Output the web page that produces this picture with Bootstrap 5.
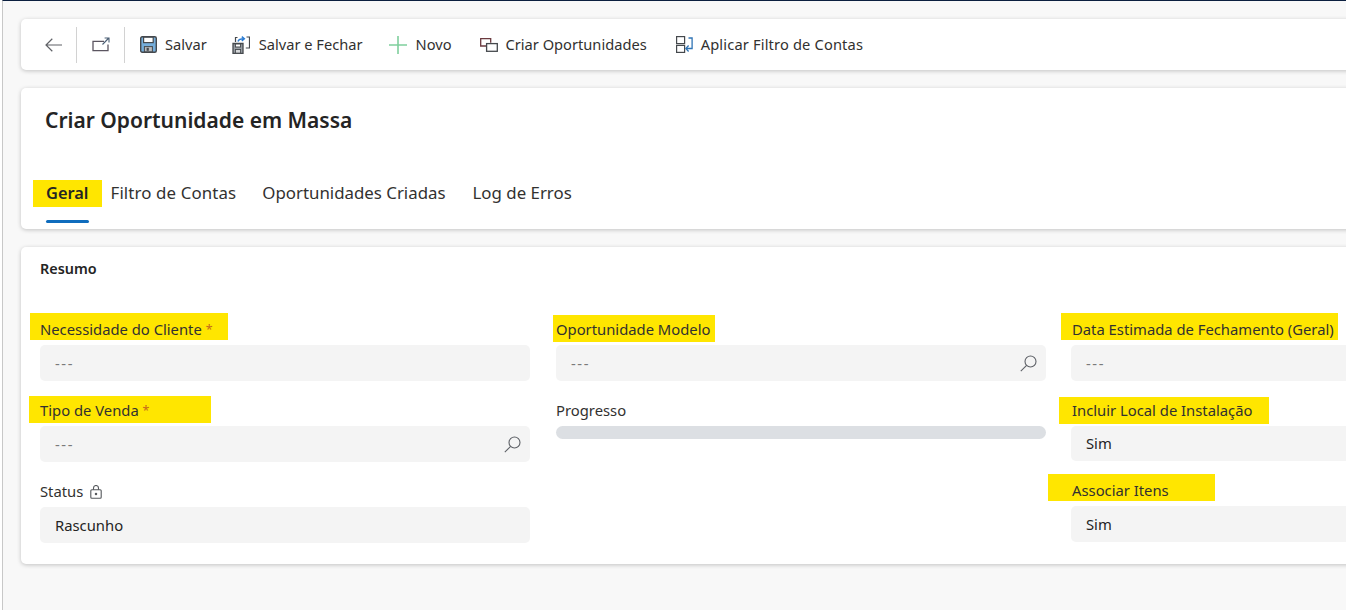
<!DOCTYPE html>
<html lang="pt-BR">
<head>
<meta charset="utf-8">
<title>Criar Oportunidade em Massa</title>
<link href="https://cdn.jsdelivr.net/npm/bootstrap@5.3.0/dist/css/bootstrap.min.css" rel="stylesheet">
<style>
html,body{height:100%;margin:0;background:#fff;overflow:hidden}
body{font-family:"Noto Sans","Open Sans",sans-serif;color:#242424;font-size:14px}
.shell{width:1344px;height:610px;overflow:hidden;background:#f8f8f8;border-top:1px solid #0b1f3f;border-left:1px solid #c8c8c8;margin-left:2px;position:relative;padding:18px 0 0 18px}
.pane{width:1400px;background:#fff;border:0;border-radius:5px;box-shadow:0 1px 4px rgba(0,0,0,.22)}
.tbar{height:51px;margin-bottom:18px;padding-left:11px}
.tb-icon{width:44px;height:36px}
.tb-arrow{margin-right:2px}
.tb-icon2{width:47px;height:36px}
.tb-sep{width:1px;height:36px;background:#d2d2d2}
.tb-list{margin-left:2px}
.tb-item{padding:0 13px;height:36px;gap:8px;font-size:14.65px;color:#323130;white-space:nowrap}
.tb-wide{gap:9px}
.tb-snug{margin-right:-1px}
.tb-shift{margin-left:2px}
.tb-last{margin-left:3px;letter-spacing:.16px}
.head-pane{height:141px;margin-bottom:18px;padding:18px 0 0 24px}
.page-title{font-size:21px;font-weight:600;line-height:28px;margin:0 0 47px;color:#242424}
.tabs-row{padding-left:1px;gap:22px}
.tab-link{position:relative;z-index:0;font-size:16.85px;line-height:24px;color:#323130;white-space:nowrap;height:49px}
.tab-link.on{font-weight:600;font-size:16.4px;color:#242424}
.tab-link.on::after{content:"";position:absolute;left:0;right:0;top:39px;height:3px;border-radius:2px;background:#0f6cbd}
.tab-wide{letter-spacing:.12px}
.tab-gap{margin-left:4px}
.tab-gap2{margin-left:5px}
.form-pane{height:317px;padding:12px 0 0 19px}
.sec-title{font-size:14.4px;font-weight:600;line-height:20px;margin:0 0 40px;color:#242424}
.fcol{width:490px;flex:none}
.fcol-b{margin-left:26px}
.fcol-c{margin-left:25px}
.fcol-c .fld-label{padding-left:1px}
.fld{height:81px}
.fld-tight{height:80px}
.fld-tight .fbox{height:35px}
.fld-label{position:relative;z-index:0;display:block;font-size:14.8px;line-height:20px;height:20px;margin:0 0 6px;color:#323130;white-space:nowrap}
.req{color:#c5691d;font-size:12.5px;vertical-align:1px}
.fbox{height:36px;background:#f4f4f4;border-radius:5px;padding:0 9px 0 15px;font-size:14.8px;color:#242424}
.fbox-empty{color:#7a7a7a}
.dash{letter-spacing:1.6px}
.mark-y{position:absolute;background:#ffe600;z-index:-1;height:27px}
.my-tab{left:-13px;top:-1px;width:69px;height:27px}
.my-nec{left:-10px;top:-6px;width:198px}
.my-tip{left:-11px;top:-4px;width:182px}
.my-opo{left:-3px;top:-4px;width:162px}
.my-dat{left:-10px;top:-6px;width:277px}
.my-inc{left:-12px;top:-3px;width:210px}
.my-ass{left:-23px;top:-6px;width:167px}
.bar-track{height:13px;border-radius:7px;background:#dcdfe3}
.lock-ic{margin-left:7px;vertical-align:-2px}
</style>
</head>
<body>
<div class="shell">
  <div class="card pane tbar flex-row align-items-center">
    <a class="tb-icon d-flex align-items-center justify-content-center" aria-label="Voltar">
      <svg class="tb-arrow" width="17" height="14" viewBox="0 0 17 14" fill="none" stroke="#5f6166" stroke-width="1.2"><path d="M17 7H1M7.3 .8 1 7l6.3 6.2"/></svg>
    </a>
    <div class="tb-sep"></div>
    <a class="tb-icon2 d-flex align-items-center justify-content-center" aria-label="Abrir">
      <svg width="18" height="15" viewBox="0 0 18 15" fill="none"><path d="M16 7.5v6.2H1V4.3h11" stroke="#5b5560" stroke-width="1.3"/><path d="M10.5 7.5 16.8 1M12.6 1H17v4.4" stroke="#4b5f75" stroke-width="1.1"/></svg>
    </a>
    <div class="tb-sep"></div>
    <div class="tb-list d-flex align-items-center">
      <div class="tb-item tb-snug d-flex align-items-center">
        <svg width="17" height="17" viewBox="0 0 17 17" fill="none"><rect x=".7" y=".7" width="15.6" height="15.6" rx="1.5" fill="#75aedb" stroke="#45494d" stroke-width="1.4"/><rect x="3.6" y="1.2" width="9.6" height="5.4" fill="#fff" stroke="#45494d" stroke-width="1.2"/><rect x="4.4" y="10.6" width="8" height="5.2" fill="#b9bcbf" stroke="#45494d" stroke-width="1"/><rect x="6.6" y="11.8" width="2.2" height="3" fill="#45494d"/></svg>
        <span>Salvar</span>
      </div>
      <div class="tb-item tb-wide d-flex align-items-center">
        <svg width="18" height="18" viewBox="0 0 18 18" fill="none"><path d="M1 7.5h10v10H1z" fill="#9aa0a6" stroke="#45494d" stroke-width="1.3"/><rect x="3.4" y="8" width="5.2" height="3" fill="#fff" stroke="#45494d"/><rect x="3.4" y="13.5" width="5.2" height="3.6" fill="#d6d8da" stroke="#45494d" stroke-width=".9"/><path d="M3.5 6V1.5h2M14.5 1h3v11h-3.7" stroke="#45494d" stroke-width="1.2"/><path d="M6 5.5c.5-2 2-2.7 6.2-2.7M9.8.6l2.6 2.2L9.8 5" stroke="#2b7cd3" stroke-width="1.4"/></svg>
        <span>Salvar e Fechar</span>
      </div>
      <div class="tb-item tb-wide d-flex align-items-center">
        <svg width="18" height="18" viewBox="0 0 18 18" fill="none" stroke="#7fcf9d" stroke-width="1.6"><path d="M9 0v18M0 9h18"/></svg>
        <span>Novo</span>
      </div>
      <div class="tb-item tb-shift d-flex align-items-center">
        <svg width="18" height="14" viewBox="0 0 18 14" fill="none"><path d="M6 8H.7V.7h10v4" stroke="#6b3a3f" stroke-width="1.3"/><rect x="6.6" y="5.6" width="10.7" height="7.7" stroke="#45494d" stroke-width="1.3"/></svg>
        <span>Criar Oportunidades</span>
      </div>
      <div class="tb-item tb-last d-flex align-items-center">
        <svg width="17" height="17" viewBox="0 0 17 17" fill="none"><rect x=".6" y=".6" width="8" height="7" stroke="#45494d" stroke-width="1.2"/><rect x=".6" y="9.4" width="8" height="7" stroke="#45494d" stroke-width="1.2"/><path d="M12.5 2h3.6v10.5h-5.6" stroke="#2f74b5" stroke-width="1.3"/><path d="M12.6 9.5 9.9 12.5l2.7 3" stroke="#2f74b5" stroke-width="1.3"/></svg>
        <span>Aplicar Filtro de Contas</span>
      </div>
    </div>
  </div>

  <div class="card pane head-pane">
    <h1 class="page-title">Criar Oportunidade em Massa</h1>
    <div class="tabs-row d-flex">
      <div class="tab-link on"><span class="mark-y my-tab"></span>Geral</div>
      <div class="tab-link tab-wide">Filtro de Contas</div>
      <div class="tab-link tab-gap">Oportunidades Criadas</div>
      <div class="tab-link tab-gap2">Log de Erros</div>
    </div>
  </div>

  <div class="card pane form-pane">
    <div class="sec-title">Resumo</div>
    <div class="d-flex">
      <div class="fcol">
        <div class="fld">
          <label class="fld-label"><span class="mark-y my-nec"></span>Necessidade do Cliente <span class="req">*</span></label>
          <div class="fbox fbox-empty d-flex align-items-center"><span class="dash">---</span></div>
        </div>
        <div class="fld">
          <label class="fld-label"><span class="mark-y my-tip"></span>Tipo de Venda <span class="req">*</span></label>
          <div class="fbox fbox-empty d-flex align-items-center justify-content-between"><span class="dash">---</span>
            <svg width="17" height="17" viewBox="0 0 17 17" fill="none" stroke="#5d6066" stroke-width="1.1"><circle cx="10.5" cy="6.5" r="5.5"/><path d="M6.6 10.4.8 16.2"/></svg>
          </div>
        </div>
        <div class="fld">
          <label class="fld-label">Status<svg class="lock-ic" width="12" height="14" viewBox="0 0 12 14" fill="none" stroke="#55585c" stroke-width="1.1"><rect x=".8" y="4.8" width="10.4" height="8.4" rx="1"/><path d="M3.5 4.8V3a2.5 2.5 0 0 1 5 0v1.8"/><circle cx="6" cy="9" r=".7" fill="#55585c"/></svg></label>
          <div class="fbox d-flex align-items-center">Rascunho</div>
        </div>
      </div>
      <div class="fcol fcol-b">
        <div class="fld">
          <label class="fld-label"><span class="mark-y my-opo"></span>Oportunidade Modelo</label>
          <div class="fbox fbox-empty d-flex align-items-center justify-content-between"><span class="dash">---</span>
            <svg width="17" height="17" viewBox="0 0 17 17" fill="none" stroke="#5d6066" stroke-width="1.1"><circle cx="10.5" cy="6.5" r="5.5"/><path d="M6.6 10.4.8 16.2"/></svg>
          </div>
        </div>
        <div class="fld">
          <label class="fld-label">Progresso</label>
          <div class="bar-track"></div>
        </div>
      </div>
      <div class="fcol fcol-c">
        <div class="fld">
          <label class="fld-label"><span class="mark-y my-dat"></span>Data Estimada de Fechamento (Geral)</label>
          <div class="fbox fbox-empty d-flex align-items-center"><span class="dash">---</span></div>
        </div>
        <div class="fld fld-tight">
          <label class="fld-label"><span class="mark-y my-inc"></span>Incluir Local de Instalação</label>
          <div class="fbox d-flex align-items-center">Sim</div>
        </div>
        <div class="fld">
          <label class="fld-label"><span class="mark-y my-ass"></span>Associar Itens</label>
          <div class="fbox d-flex align-items-center">Sim</div>
        </div>
      </div>
    </div>
  </div>
</div>
<script src="https://cdn.jsdelivr.net/npm/bootstrap@5.3.0/dist/js/bootstrap.bundle.min.js"></script>
</body>
</html>
